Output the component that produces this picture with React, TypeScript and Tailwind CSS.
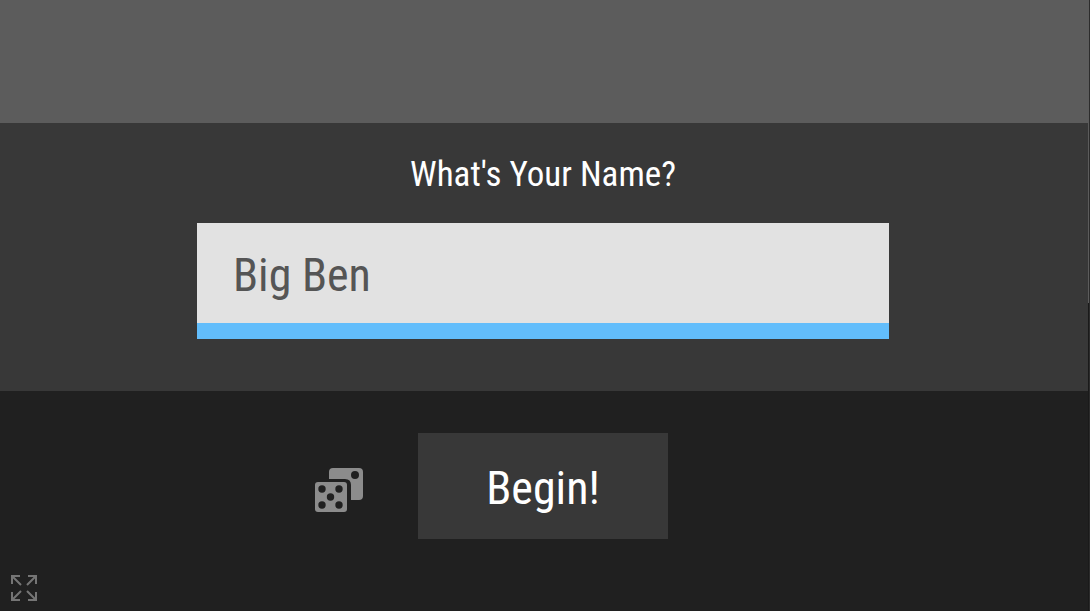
import { useState } from 'react';

const NAMES = ['Big Ben', 'Little Sue', 'Old Tom', 'Quick Meg'];

const DiceIcon = () => (
    <svg viewBox="0 0 48 44" className="w-12 h-11" aria-hidden="true">
        <path
            fill="#8c8c8c"
            d="M18 0H44Q48 0 48 4V28Q48 32 44 32H36V17Q36 11 30 11H14V4Q14 0 18 0Z"
        />
        <rect x="0" y="14" width="32" height="30" rx="3" fill="#8c8c8c" />
        <g fill="#202020">
            <circle cx="40" cy="7" r="4" />
            <circle cx="7" cy="21" r="3.7" />
            <circle cx="24" cy="21" r="3.7" />
            <circle cx="15.5" cy="29" r="3.7" />
            <circle cx="7" cy="37" r="3.7" />
            <circle cx="24" cy="37" r="3.7" />
        </g>
    </svg>
);

const ExpandIcon = () => (
    <svg viewBox="0 0 26 26" className="size-[26px]" fill="none" stroke="#757575" strokeWidth="2" aria-hidden="true">
        <path d="M1 9V1H9M1 1L10 10" />
        <path d="M17 1H25V9M25 1L16 10" />
        <path d="M1 17V25H9M1 25L10 16" />
        <path d="M25 17V25H17M25 25L16 16" />
    </svg>
);

export default function App() {
    const [name, setName] = useState(NAMES[0]);

    const rollName = () => {
        const others = NAMES.filter(n => n !== name);
        setName(others[Math.floor(Math.random() * others.length)]);
    };

    return (
        <div className="flex min-h-screen bg-[#202020] text-white font-['Ubuntu_Condensed','Roboto_Condensed','Roboto',sans-serif]">
            <main className="flex flex-1 flex-col">
                <div className="h-[123px] bg-[#5c5c5c]" />

                {/* Name entry */}
                <section className="flex flex-col items-center bg-[#383838] pl-4 pr-[18px] pt-7 pb-[52px]">
                    <label htmlFor="name" className="text-[35px] leading-[48px]">What's Your Name?</label>
                    <input
                        id="name"
                        type="text"
                        value={name}
                        onChange={e => setName(e.target.value)}
                        className="mt-6 h-[116px] w-full max-w-[692px] border-b-16 border-[#62bdfb] bg-[#e2e2e2] px-9 pt-1 text-[46px] text-[#555555] outline-none"
                    />
                </section>

                {/* Actions */}
                <section className="grid grid-cols-[1fr_auto_1fr] items-center gap-[55px] pt-[42px] pr-[2px]">
                    <button type="button" onClick={rollName} aria-label="Random name" className="justify-self-end pt-2">
                        <DiceIcon />
                    </button>
                    <button type="button" className="h-[106px] w-[250px] bg-[#383838] pt-1 text-[46px]">
                        Begin!
                    </button>
                </section>

                <footer className="mt-auto flex px-[11px] pb-[10px]">
                    <button type="button" aria-label="Full screen">
                        <ExpandIcon />
                    </button>
                </footer>
            </main>

            {/* Scroll track */}
            <div className="w-[2px] border-r border-[#2c2c2c] bg-[#1a1a1a]">
                <div className="h-[303px] bg-[#5c5c5c]" />
            </div>
        </div>
    );
}
